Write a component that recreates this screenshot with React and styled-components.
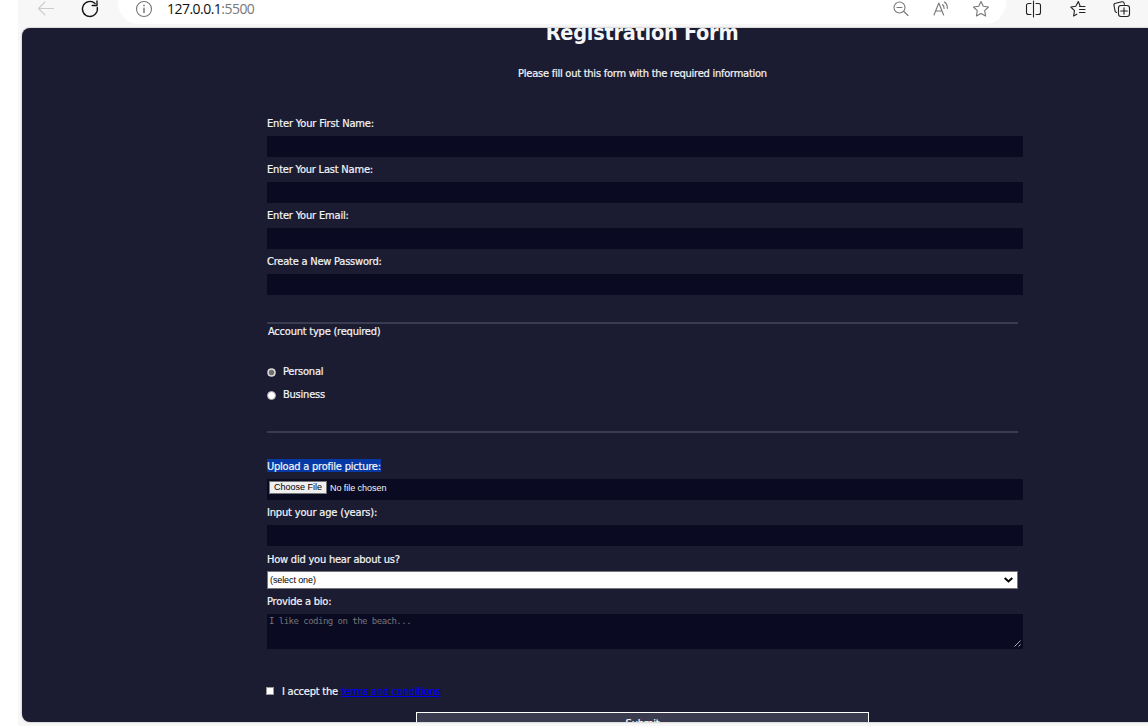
import React from "react";
import styled, { createGlobalStyle } from "styled-components";

const Global = createGlobalStyle`
  * { box-sizing: border-box; }
  html, body { margin: 0; height: 726px; overflow: hidden; background: #fff; }
  body { font-family: "DejaVu Sans Condensed", "DejaVu Sans", sans-serif; font-stretch: condensed; }
`;

const Browser = styled.div`
  width: 1130px;
  height: 726px;
  margin-left: 18px;
  background: #f7f7f7;
  overflow: hidden;
`;

const Toolbar = styled.header`
  display: flex;
  height: 28px;
  padding-left: 18px;
  svg { display: block; flex: none; overflow: visible; }
`;

const NavButtons = styled.div`
  display: flex;
  gap: 24px;
  width: 82px;
`;

const AddressBar = styled.div`
  display: flex;
  width: 888px;
  height: 24px;
  padding: 0 16px 0 16px;
  background: #fff;
  border-radius: 0 0 20px 20px / 0 0 22px 22px;
`;

const Address = styled.div`
  flex: 1;
  margin-left: 15px;
  font: 14px/18px "Open Sans", sans-serif;
  letter-spacing: ${(p) => p.$spacing};
  color: #777;
  span { color: #111; }
`;

const AddressTools = styled.div`
  display: flex;
  gap: 20px;
`;

const BrowserTools = styled.div`
  display: flex;
  gap: 24px;
  margin-left: 18px;
`;

const Page = styled.main`
  height: 694px;
  margin-left: 4px;
  background: #1b1b32;
  color: #f5f6f7;
  border-radius: 8px 0 0 8px;
  overflow: hidden;
  box-shadow: 0 0 2px #999;
`;

const Title = styled.h1`
  margin: -7px 0 0;
  padding-left: 114px;
  width: 1126px;
  text-align: center;
  font-size: 21.5px;
  line-height: 24px;
  height: 24px;
  letter-spacing: ${(p) => p.$spacing};
`;

const Text = styled.span`
  font-size: 11px;
  letter-spacing: ${(p) => p.$spacing || "-0.22px"};
  -webkit-text-stroke: 0.2px currentColor;
  white-space: nowrap;
`;

const Intro = styled.p`
  margin: 16px 0 0;
  width: 1126px;
  padding-left: 115px;
  height: 24px;
  line-height: 22px;
  text-align: center;
`;

const Form = styled.form`
  width: 751px;
  margin: 26px 0 0 245px;
`;

const Label = styled.label`
  display: block;
  height: 25px;
  line-height: ${(p) => (p.$low ? "24px" : "22px")};
`;

const Highlight = styled.span`
  display: inline-block;
  height: 13px;
  line-height: 11px;
  background: #0539a6;
  vertical-align: top;
  margin-top: 5px;
`;

const Input = styled.input`
  display: block;
  width: 756px;
  height: 21px;
  border: 0;
  padding: 0 3px;
  background: #0a0a23;
  color: #fff;
  outline: 0;
`;

const AccountType = styled.section`
  margin: 27px 0 21px;
  height: 111px;
  border-top: 2px solid #3b3b4f;
  border-bottom: 2px solid #3b3b4f;
`;

const Legend = styled.div`
  height: 36px;
  padding-left: 1px;
  line-height: 12px;
`;

const Choice = styled.label`
  display: flex;
  align-items: center;
  gap: 7px;
  height: 23px;
  line-height: 22px;
`;

const Radio = styled.span`
  width: 9px;
  height: 9px;
  margin-top: 1px;
  border-radius: 50%;
  border: 1px solid ${(p) => (p.$checked ? "#ccc" : "#aaa")};
  background: ${(p) => (p.$checked ? "radial-gradient(#707070 0 2.3px, #eee 3.3px)" : "#fff")};
`;

const FilePicker = styled.div`
  display: flex;
  width: 756px;
  height: 21px;
  padding: 2px;
  background: #0a0a23;
`;

const FileButton = styled.button`
  width: 58px;
  height: 13px;
  margin: 0;
  padding: 0 0 1px;
  border: 1px solid #777;
  background: #efefef;
  color: #000;
  font: 9px/10px "Liberation Sans", Arial, sans-serif;
  letter-spacing: ${(p) => p.$spacing};
`;

const FileStatus = styled.span`
  margin-left: 3px;
  font: 9px/14px "Liberation Sans", Arial, sans-serif;
  letter-spacing: ${(p) => p.$spacing};
`;

const Select = styled.div`
  display: flex;
  align-items: center;
  justify-content: space-between;
  width: 751px;
  height: 18px;
  padding: 0 4px 0 2px;
  background: #fff;
  border: 1px solid #767676;
  color: #000;
  font: 9px/16px "Liberation Sans", Arial, sans-serif;
  span { letter-spacing: ${(p) => p.$spacing}; }
`;

const Bio = styled.div`
  display: flex;
  justify-content: space-between;
  width: 756px;
  height: 35px;
  padding: 2px;
  background: #0a0a23;
  color: #757575;
  font: 9px/11px "DejaVu Sans Mono", monospace;
  letter-spacing: ${(p) => p.$spacing};
  svg { align-self: flex-end; }
`;

const Terms = styled.label`
  display: flex;
  align-items: center;
  height: 22px;
  margin-top: 31px;
  line-height: 22px;
  ${Text} { padding-top: 1px; }
`;

const Checkbox = styled.span`
  width: 8px;
  height: 8px;
  margin: 0 8px 0 -1px;
  background: #fff;
  border: 1px solid #999;
`;

const Link = styled.a`
  color: #0000ee;
  text-decoration: underline;
`;

const Submit = styled.button`
  display: block;
  width: 453px;
  height: 24px;
  margin: 10px 0 0 149px;
  padding: 0 0 2px;
  border: 1px solid #fff;
  background: #3b3b4f;
  color: #fff;
  font-family: inherit;
  line-height: 20px;
`;

const Icon = ({ w = 18, children, color = "#222", ...rest }) => (
  <svg width={w} height="20" viewBox={`0 0 ${w} 20`} fill="none" stroke={color} strokeWidth="1.1" strokeLinecap="round" strokeLinejoin="round" {...rest}>
    {children}
  </svg>
);

const star = "M9 1.5l2.3 4.8 5.2.7-3.8 3.7.9 5.3L9 13.500l-4.600 2.500.9-5.300L1.500 7l5.200-.7z";

const fields = [
  ["Enter Your First Name:", "text", "-0.15px"],
  ["Enter Your Last Name:", "text", "-0.2px"],
  ["Enter Your Email:", "email", "-0.17px"],
  ["Create a New Password:", "password", "-0.22px"],
];

export default function App() {
  return (
    <>
      <Global />
      <Browser>
        <Toolbar>
          <NavButtons>
            <Icon w={20} color="#ccc"><path d="M2.500 8.500h15M9 2L2.500 8.500 9 15" /></Icon>
            <Icon w={20} color="#111" strokeWidth="1.35"><path d="M17.300 7.500a7.500 7.500 0 1 1-2.200-4M17 1v4.500h-4.800" /></Icon>
          </NavButtons>
          <AddressBar>
            <Icon color="#777"><circle cx="10" cy="9" r="7.500" /><path d="M10 8.200v4.300M10 5.300v.5" strokeWidth="1.500" /></Icon>
            <Address $spacing="-0.53px"><span>127.0.0.1</span>:5500</Address>
            <AddressTools>
              <Icon w={20} color="#777"><circle cx="7.500" cy="7.500" r="5.500" /><path d="M5 7.500h5M11.800 11.500l4.200 4" /></Icon>
              <Icon w={20} color="#777"><path d="M2 15L6.800 3l4.800 12M3.600 11h6.400M10.500 4.500c1 .8 1.600 2.200 1.600 4M12.500 2c2 1.500 3 3.500 2.800 6.500" /></Icon>
              <Icon w={18} color="#777"><path d={star} /></Icon>
            </AddressTools>
          </AddressBar>
          <BrowserTools>
            <Icon w={20}><path d="M7 3.500H4.500a2 2 0 0 0-2 2v7a2 2 0 0 0 2 2H7M12 3.500h2.500a2 2 0 0 1 2 2v7a2 2 0 0 1-2 2H12M9.500 1v16" /></Icon>
            <Icon w={20}><path d="M15.500 6.500h-3.200l-2-5-2.500 4.800-5 .7 3.700 3.700-.9 5.300 3.200-1.800M11.500 6.500h5.500M11.500 9.500h5.500M11.500 12.500h5.500" /></Icon>
            <Icon w={20}><path d="M4.500 12.500l-1.300-.9L2 5.500c-.2-1.100.4-2 1.500-2.200l6.500-1.500c1.200-.2 2 .4 2.200 1.500l.2 1" /><rect x="6.500" y="5.500" width="11" height="11" rx="2.500" /><path d="M8.700 11h6.600M12 7.700v6.600" /></Icon>
          </BrowserTools>
        </Toolbar>
        <Page>
          <Title $spacing="-0.25px">Registration Form</Title>
          <Intro><Text $spacing="-0.24px">Please fill out this form with the required information</Text></Intro>
          <Form>
            {fields.map(([label, type, spacing]) => (
              <React.Fragment key={label}>
                <Label><Text $spacing={spacing}>{label}</Text></Label>
                <Input type={type} />
              </React.Fragment>
            ))}
            <AccountType>
              <Legend><Text>Account type (required)</Text></Legend>
              <Choice><Radio $checked /><Text>Personal</Text></Choice>
              <Choice><Radio /><Text>Business</Text></Choice>
            </AccountType>
            <Label><Highlight><Text>Upload a profile picture:</Text></Highlight></Label>
            <FilePicker>
              <FileButton type="button" $spacing="-0.02px">Choose File</FileButton>
              <FileStatus $spacing="-0.05px">No file chosen</FileStatus>
            </FilePicker>
            <Label><Text $spacing="-0.17px">Input your age (years):</Text></Label>
            <Input />
            <Label $low><Text>How did you hear about us?</Text></Label>
            <Select $spacing="-0.1px">
              <span>(select one)</span>
              <svg width="9" height="8" viewBox="0 0 9 8" fill="none" stroke="#000" strokeWidth="2"><path d="M.7 2l3.800 3.500L8.300 2" /></svg>
            </Select>
            <Label><Text>Provide a bio:</Text></Label>
            <Bio $spacing="-0.52px">
              <span>I like coding on the beach...</span>
              <svg width="7" height="7" viewBox="0 0 7 7" stroke="#aaa" strokeWidth="1"><path d="M.5 6.500l6-6M4.500 6.500l2-2" /></svg>
            </Bio>
            <Terms>
              <Checkbox />
              <Text $spacing="-0.24px">I accept the <Link>terms and conditions</Link></Text>
            </Terms>
            <Submit type="button"><Text>Submit</Text></Submit>
          </Form>
        </Page>
      </Browser>
    </>
  );
}
